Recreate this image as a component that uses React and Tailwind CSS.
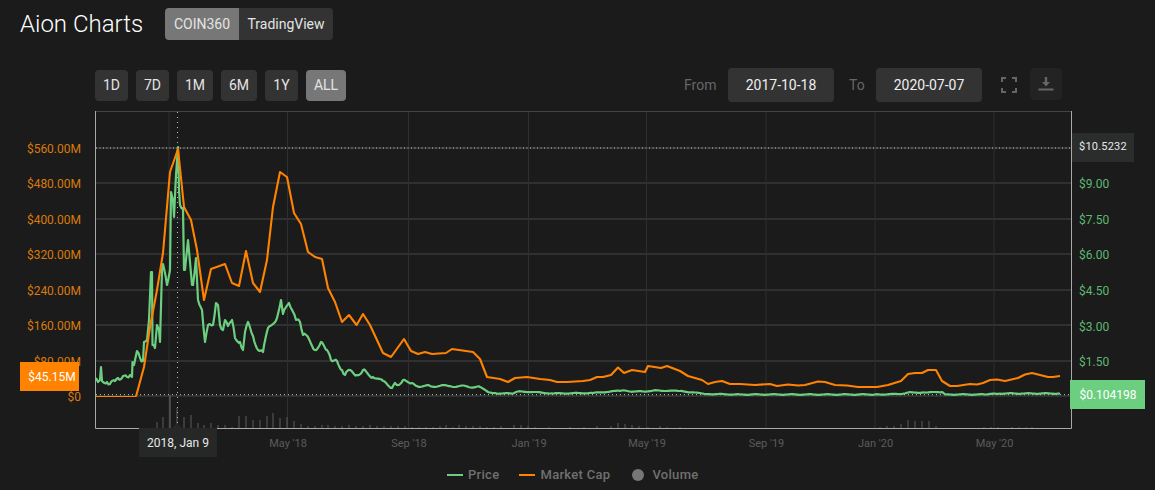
import { Fragment } from "react";

const orange = "#ff8300";
const green = "#6ccf7f";

const leftLabels = [
  ["$560.00M", 148], ["$480.00M", 183], ["$400.00M", 219], ["$320.00M", 254],
  ["$240.00M", 290], ["$160.00M", 325], ["$80.00M", 361], ["$0", 396],
];
const rightLabels = [
  ["$9.00", 183], ["$7.50", 219], ["$6.00", 254], ["$4.50", 290], ["$3.00", 326], ["$1.50", 361],
];
const gridY = [148, 183, 219, 254, 290, 325, 361, 396];
const months = [
  [169, ""], [287.5, "May '18"], [408.5, "Sep '18"], [528.5, "Jan '19"],
  [646.5, "May '19"], [766, "Sep '19"], [875, "Jan '20"], [994, "May '20"],
];

const capLine = [
  [136,396.5],[144,367],[150,327],[157,290],[163,253],[170,172],[177,152],[178,149],[184,207],[191,220],[197,250],[204,300],
  [211,269],[225,264],[232,283],[239,286],[246,251],[253,283],[260,292],[267,260],[273,207],[280,172],[287,177],[294,213],
  [301,224],[308,252],[315,257],[322,259],[328,288],[335,302],[342,322],[349,315],[356.6,325],[363,314],[370,325],[383,353],
  [391,357],[404,339],[411,351],[418,354],[425,352],[432,354],[446,353],[452,349],[473,352],[480,359],[487,377],[500,379],
  [508,382],[515,378],[527,377],[540,379],[550,380],[557,382],[567,382],[583,381],[590,380],[597,377],[603,377],[611,375],
  [618,367.5],[624,373],[632,370],[645,372],[648,366],[661,368],[667,366],[680,371],[688,376],[702,380],[708,384],[715,382],
  [722,381],[730,384],[740,384],[755,385],[770,384],[777,386],[788,384.5],[798,385.5],[805,385],[818,381.5],[825,382],[835,385],
  [847,385.5],[858,387],[877,387],[888,385],[901,381],[908,374],[915,373],[922,373],[928,370],[936,370],[942,381],[950,386],
  [957,386],[970,384],[977,384.5],[983,383],[990,380],[997,379.5],[1005,381],[1018,378],[1025,374.5],[1032,373],[1048,377],
  [1053,377],[1060,376],
];

const priceKeys = [
  [96,378],[98,382],[100,380],[101,367],[102,381],[107,382],[110,384],[115,381],[118,378],[122,378],[123,376],[127,377],[130,375],
  [132,377],[132.5,362],[134,365],[137,351],[140,358],[143,361],[144,342],[147,340],[149,320],[151,272],[152,272],[152.5,345],
  [155,348],[157,325],[159,330],[160,342],[162,270],[163,264],[167,285],[170,270],[171,192],[173,200],[174,217],[176,175],[178,147],
  [179,190],[180,205],[183,208],[184,270],[185,270],[188,240],[190,262],[192,285],[193,285],[196,258],[198,300],[202,310],[205,342],[208,325],
  [213,325],[216,303],[218,305],[220,325],[223,330],[225,320],[228,326],[232,320],[235,338],[240,342],[243,350],[245,332],[248,322],
  [253,336],[258,350],[263,352],[268,328],[277,318],[281,300],[283,314],[289,303],[296,320],[300,322],[303,335],[308,337],[315,350],
  [321,342],[327,350],[331,360],[337,361],[342,370],[345,375],[350,370],[357,375],[363,370],[373,377],[383,381],[392,388],[395,383],
  [399,385],[403,380],[412,383],[417,386],[430,386],[450,386],[480,387],[488,392],[497,393.5],[513,393.5],[518,391.5],[533,392],
  [553,393.5],[593,393],[622,390.5],[630,391.5],[647,391.5],[653,390.5],[680,391],[707,394],[740,394.5],[875,394.5],[900,394],
  [908,392.5],[925,392.5],[942,392],[946,394.5],[985,394.5],[1000,393.5],[1060,393.5],
];

// fine noise between the key points so the price line looks like real ticks
const noisy = (keys) => {
  const out = [];
  keys.forEach(([x, y], i) => {
    out.push([x, y]);
    const next = keys[i + 1];
    if (!next || next[0] - x < 2.5) return;
    const steps = Math.floor((next[0] - x) / 1.2);
    for (let s = 1; s < steps; s++) {
      const t = s / steps;
      const size = x < 370 ? 1.8 : x < 480 ? 0.9 : 0.3;
      out.push([x + (next[0] - x) * t, y + (next[1] - y) * t + Math.sin(s * 12.9898 + x * 78.233) * size]);
    }
  });
  return out;
};

const toPoints = (list) => list.map(([x, y]) => `${x},${y.toFixed(1)}`).join(" ");

const volumeBars = [
  [157,422],[163,417],[170,395],[177,408],[184,417],[191,415],[198,423],[204,425],[211,423],[218,425],[225,425],[232,427],
  [239,416],[246,416],[253,420],[260,420],[267,416],[273,413],[280,418],[287,417],[294,421],[301,424],[308,426],[315,426],
  [322,425],[328,425],[335,426],[342,426],[349,425],[356,426],[363,426],[370,425],[377,426],[384,426],[391,426],[398,426],
  [405,426],[412,427],[419,427],[426,427],[433,427],[440,426],[446,425],[453,427],[459,425],[466,426],[473,426],[480,426],
  [487,427],[494,427],[501,426],[514,425],[521,425],[528,426],[535,427],[549,427],[570,427],[584,427],[597,426],[611,426],
  [618,423],[625,424],[632,425],[639,426],[648,427],[660,426],[667,427],[680,427],[880,427],[887,426],[894,426],[901,424],
  [908,420],[915,421],[922,421],[929,421],[936,426],[984,427],[991,427],[998,427],[1012,427],[1019,427],[1026,427],[1032,427],
];

function PriceChart() {
  return (
    <svg viewBox="0 108 1155 352" className="block w-[1155px] h-[352px]">
      {gridY.map((y) => (
        <line key={y} x1="96" x2="1071" y1={y} y2={y} stroke="#383838" strokeWidth="1.3" />
      ))}
      {months.map(([x]) => (
        <line key={x} x1={x} x2={x} y1="112" y2="428" stroke="#2f2f2f" />
      ))}
      <line x1="96" x2="1071" y1="111.5" y2="111.5" stroke="#444" strokeWidth="1" />
      <path d="M95.5 111V428.5H1071.5V111" fill="none" stroke="#a8a8a8" />

      {volumeBars.map(([x, y]) => (
        <line key={x} x1={x} x2={x} y1={y} y2="428" stroke={x === 170 ? "#777" : "#5c5c5c"} />
      ))}

      <line x1="177.5" x2="177.5" y1="112" y2="428" stroke="#bbb" strokeDasharray="1 4" />
      <line x1="96" x2="1071" y1="148" y2="148" stroke="#ccc" strokeDasharray="1 2.5" />
      <line x1="96" x2="1071" y1="394.7" y2="394.7" stroke="#a8e0b4" strokeDasharray="1 3" />

      <polyline points={toPoints(noisy(priceKeys))} fill="none" stroke={green} strokeWidth="2.2" strokeLinejoin="round" />
      <line x1="96" x2="136" y1="396.5" y2="396.5" stroke={orange} strokeWidth="1" />
      <polyline points={toPoints(capLine)} fill="none" stroke={orange} strokeWidth="2.1" strokeLinejoin="round" />

      <g fontFamily="Roboto, sans-serif" fontSize="12">
        {leftLabels.map(([text, y]) => (
          <text key={text} x="81" y={y + 4.5} textAnchor="end" fill="#d97a0c">{text}</text>
        ))}
        {rightLabels.map(([text, y]) => (
          <text key={text} x="1079" y={y + 4.5} fill="#5fb872">{text}</text>
        ))}
        {months.map(([x, text]) => (
          <Fragment key={x}>
            {text && <text x={x + 0.5} y="447" fontSize="11" textAnchor="middle" fill="#5c5c5c">{text}</text>}
          </Fragment>
        ))}
      </g>
    </svg>
  );
}

const ranges = [
  ["1D", "w-[33px]"], ["7D", "w-[33px]"], ["1M", "w-9"], ["6M", "w-9"], ["1Y", "w-[33px]"], ["ALL", "w-10"],
];

export default function App() {
  return (
    <div className="w-[1155px] h-[490px] overflow-hidden bg-[#1b1b1b] font-['Roboto',sans-serif]">
      {/* Header */}
      <div className="flex items-center pt-2 pl-5">
        <h1 className="w-[145px] text-2xl font-light leading-8 text-white">Aion Charts</h1>
        <div className="flex h-8 overflow-hidden rounded text-sm text-[#e4e4e4]">
          <button className="w-[74px] bg-[#777]">COIN360</button>
          <button className="w-[94px] bg-[#333]">TradingView</button>
        </div>
      </div>

      {/* Range + date controls */}
      <div className="flex items-center justify-between pl-[95px] pr-[93px] mt-7">
        <div className="flex gap-2">
          {ranges.map(([label, width]) => (
            <button
              key={label}
              className={`${width} h-[31px] rounded text-sm text-[#e4e4e4] ${label === "ALL" ? "bg-[#777]" : "bg-[#333]"}`}
            >
              {label}
            </button>
          ))}
        </div>
        <div className="flex items-center text-sm">
          <span className="w-11 text-[#666]">From</span>
          <div className="flex h-[34px] w-[106px] items-center justify-center rounded bg-[#333] text-[#eee]">2017-10-18</div>
          <span className="w-[42px] pl-[15px] text-[#666]">To</span>
          <div className="flex h-[34px] w-[106px] items-center justify-center rounded bg-[#333] text-[#eee]">2020-07-07</div>
          <svg viewBox="0 0 16 16" className="ml-[19px] h-4 w-4" fill="none" stroke="#666" strokeWidth="2">
            <path d="M1 5V1H5M11 1H15V5M15 11V15H11M5 15H1V11" />
          </svg>
          <button className="ml-[13px] flex h-8 w-8 items-center justify-center self-start rounded bg-[#232323]">
            <svg viewBox="0 0 16 16" className="h-4 w-4" fill="#666">
              <path d="M6.8 1H9.2V6H12L8 10.5L4 6H6.8ZM0.5 12.5H15.5V14.5H0.5Z" />
            </svg>
          </button>
        </div>
      </div>

      {/* Chart */}
      <div className="relative mt-1.5">
        <PriceChart />
        <div className="absolute left-[1072px] top-[25px] flex h-[29px] w-[62px] items-center justify-center bg-[#2b2d2d] text-[11px] tracking-[0.2px] text-[#e8e8e8]">$10.5232</div>
        <div className="absolute left-5 top-[254px] flex h-[29px] w-[59px] items-center justify-center bg-[#ff8300] pl-[5px] text-xs text-white">$45.15M</div>
        <div className="absolute left-[1070px] top-[272px] flex h-[29px] w-[75px] items-center justify-center bg-[#6ccf7f] pl-px text-xs text-white">$0.104198</div>
        <div className="absolute left-[139px] top-[320px] flex h-[29px] w-[78px] items-center justify-center bg-[#262828] text-xs text-[#e8e8e8]">
          <span className="absolute -top-[5px] left-[33px] h-0 w-0 border-x-[5px] border-b-[5px] border-x-transparent border-b-[#262828]" />
          2018, Jan 9
        </div>
      </div>

      {/* Legend */}
      <div className="mt-[5px] flex items-center pl-[447px] text-[13px] font-medium tracking-[0.3px] text-[#707070]">
        <span className="h-0.5 w-4 bg-[#6ccf7f]" />
        <span className="ml-[5px]">Price</span>
        <span className="ml-5 h-0.5 w-4 bg-[#ff8300]" />
        <span className="ml-[5px]">Market Cap</span>
        <span className="ml-[22px] h-3 w-3 rounded-full bg-[#777]" />
        <span className="ml-2">Volume</span>
      </div>
    </div>
  );
}
